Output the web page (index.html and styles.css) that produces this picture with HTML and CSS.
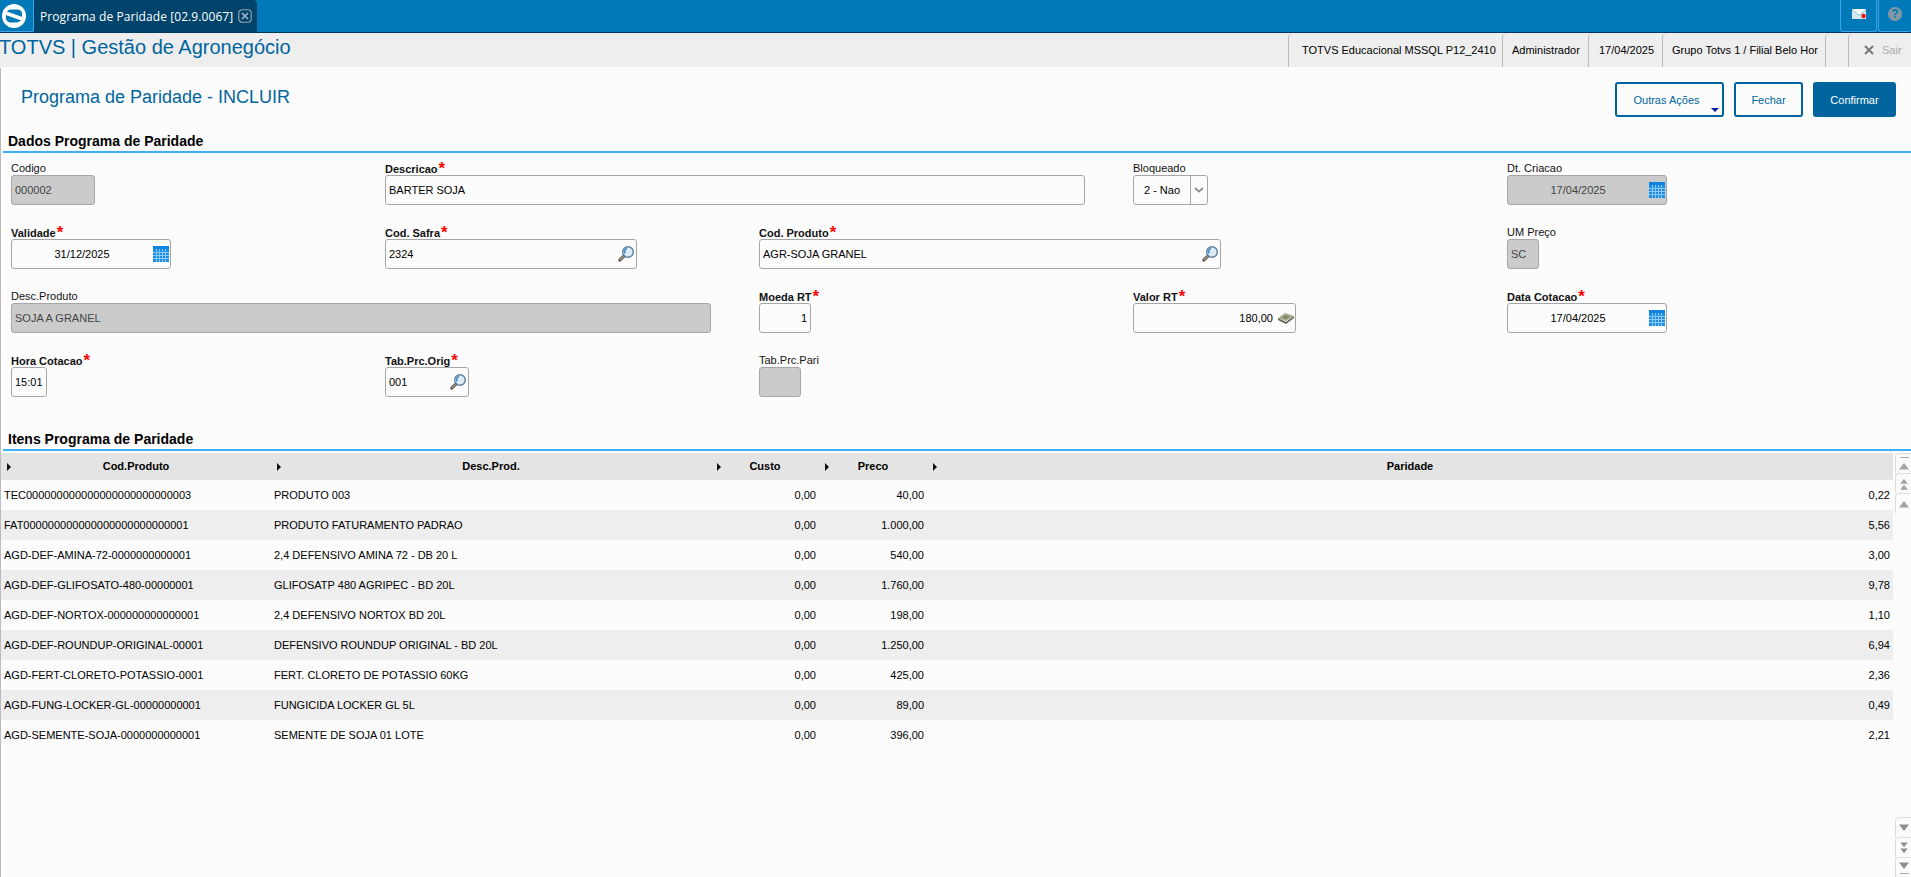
FILE: index.html
```html
<!DOCTYPE html>
<html lang="pt-BR">
<head>
<meta charset="utf-8">
<title>Programa de Paridade</title>
<link rel="stylesheet" href="styles.css">
</head>
<body>
<svg class="sprites" width="0" height="0" aria-hidden="true">
  <symbol id="cal" viewBox="0 0 16 16">
    <rect width="16" height="16" fill="#1b8fe8"/>
    <rect y="0" width="16" height="3" fill="#0f84e2"/>
    <path d="M0 6.5h16M0 9.5h16M0 12.5h16M3.5 3v13M6.5 3v13M9.5 3v13M12.5 3v13" stroke="#8cc8f5" stroke-width="1"/>
  </symbol>
  <symbol id="lupa" viewBox="0 0 16 16">
    <path d="M6.5 9.5 1.8 14.2" stroke="#6f6a60" stroke-width="3.2" stroke-linecap="round"/>
    <path d="M6.5 9.5 2 14" stroke="#a89d8a" stroke-width="1"/>
    <circle cx="10" cy="6" r="5.3" fill="#dcecf8" stroke="#5a7f9c" stroke-width="1.4"/>
    <path d="M7 7.5a3.6 3.6 0 0 1 2-5" stroke="#3b89c9" stroke-width="1.6" fill="none"/>
  </symbol>
  <symbol id="up" viewBox="0 0 16 8"><path d="M3 7.5 8 1l5 6.5z" fill="#a3a3a3"/></symbol>
  <symbol id="down" viewBox="0 0 16 8"><path d="M3 .5 8 7l5-6.5z" fill="#8f8f8f"/></symbol>
</svg>

<header class="topbar">
  <div class="logo-box">
    <svg class="logo" viewBox="0 0 28 28" width="28" height="28">
      <circle cx="14" cy="14" r="12" fill="#fff"/>
      <path d="M10 7.5h8a5 5 0 0 1 4 5.5v2a6 6 0 0 1-5 5.5h-7a5 5 0 0 1-4-5.5v-2a6 6 0 0 1 4-5.5z" fill="#0079b8"/>
      <path d="M5.5 11 22.500 17" stroke="#fff" stroke-width="3.600"/>
    </svg>
  </div>
  <div class="tab">
    <span class="tab-text">Programa de Paridade [02.9.0067]</span>
    <svg class="tab-close" viewBox="0 0 14 14" width="14" height="14">
      <rect x=".75" y=".75" width="12.5" height="12.5" rx="3.5" fill="none" stroke="#90a6b5" stroke-width="1.2"/>
      <path d="M4 4l6 6M10 4l-6 6" stroke="#a5b6c2" stroke-width="1.6"/>
    </svg>
  </div>
  <div class="top-actions">
    <div class="top-btn top-btn-mail">
      <svg viewBox="0 0 16 12" width="16" height="12">
        <path d="M1 1.5h14v9.5H1z" fill="#d6e9f5"/>
        <path d="M1 1h14L8 6.5z" fill="#fff"/>
        <path d="M1 2l7 5.6L15 2" fill="none" stroke="#7fb2d2" stroke-width=".8"/>
        <circle cx="12.500" cy="8" r="2.200" fill="#f01010"/>
      </svg>
    </div>
    <div class="top-btn top-btn-help"><span class="help">?</span></div>
  </div>
</header>

<div class="appbar">
  <div class="app-title">TOTVS | Gestão de Agronegócio</div>
  <div class="app-info">
    <div class="info info-env">TOTVS Educacional MSSQL P12_2410</div>
    <div class="info info-user">Administrador</div>
    <div class="info info-date">17/04/2025</div>
    <div class="info info-branch">Grupo Totvs 1 / Filial Belo Hor</div>
    <div class="info info-empty"></div>
    <div class="info info-exit">
      <svg viewBox="0 0 10 10" width="10" height="10"><path d="M1 1l8 8M9 1 1 9" stroke="#777" stroke-width="2"/></svg>
      <span>Sair</span>
    </div>
  </div>
</div>

<main class="page">
  <div class="page-head">
    <h1 class="page-title">Programa de Paridade - INCLUIR</h1>
    <div class="actions">
      <button class="btn btn-more">Outras Ações<i class="caret"></i></button>
      <button class="btn btn-close">Fechar</button>
      <button class="btn btn-ok">Confirmar</button>
    </div>
  </div>

  <h2 class="section">Dados Programa de Paridade</h2>
  <section class="form">
    <div class="field">
      <label>Codigo</label>
      <div class="box off w84">000002</div>
    </div>
    <div class="field span2">
      <label class="req">Descricao<em>*</em></label>
      <div class="box w700">BARTER SOJA</div>
    </div>
    <div class="field">
      <label>Bloqueado</label>
      <div class="box select w75"><span class="sel-val">2 - Nao</span><span class="sel-btn"><svg viewBox="0 0 10 6" width="10" height="6"><path d="M1 1l4 3.6L9 1" fill="none" stroke="#8a8a8a" stroke-width="1.8"/></svg></span></div>
    </div>
    <div class="field">
      <label>Dt. Criacao</label>
      <div class="box off date w160"><span class="date-val">17/04/2025</span><svg class="ico16" width="16" height="16"><use href="#cal"/></svg></div>
    </div>

    <div class="field">
      <label class="req">Validade<em>*</em></label>
      <div class="box date w160"><span class="date-val">31/12/2025</span><svg class="ico16" width="16" height="16"><use href="#cal"/></svg></div>
    </div>
    <div class="field">
      <label class="req">Cod. Safra<em>*</em></label>
      <div class="box lookup w252"><span>2324</span><svg class="ico16" width="16" height="16"><use href="#lupa"/></svg></div>
    </div>
    <div class="field span2">
      <label class="req">Cod. Produto<em>*</em></label>
      <div class="box lookup w462"><span>AGR-SOJA GRANEL</span><svg class="ico16" width="16" height="16"><use href="#lupa"/></svg></div>
    </div>
    <div class="field">
      <label>UM Preço</label>
      <div class="box off w32">SC</div>
    </div>

    <div class="field span2">
      <label>Desc.Produto</label>
      <div class="box off w700">SOJA A GRANEL</div>
    </div>
    <div class="field">
      <label class="req">Moeda RT<em>*</em></label>
      <div class="box num w52">1</div>
    </div>
    <div class="field">
      <label class="req">Valor RT<em>*</em></label>
      <div class="box money w163"><span>180,00</span>
        <svg class="ico-money" viewBox="0 0 16 11" width="16" height="11">
          <path d="M0 7l8 4 8-6v-2L8 9 0 5z" fill="#5d6350"/>
          <path d="M0 5l7-5 9 3-8 5z" fill="#a7ad8c"/>
          <path d="M4 4.6l3.4-2.4 4.4 1.4-3.6 2.6z" fill="#7e8a66"/>
        </svg>
      </div>
    </div>
    <div class="field">
      <label class="req">Data Cotacao<em>*</em></label>
      <div class="box date w160"><span class="date-val">17/04/2025</span><svg class="ico16" width="16" height="16"><use href="#cal"/></svg></div>
    </div>

    <div class="field">
      <label class="req">Hora Cotacao<em>*</em></label>
      <div class="box w35">15:01</div>
    </div>
    <div class="field">
      <label class="req">Tab.Prc.Orig<em>*</em></label>
      <div class="box lookup w84"><span>001</span><svg class="ico16" width="16" height="16"><use href="#lupa"/></svg></div>
    </div>
    <div class="field">
      <label>Tab.Prc.Pari</label>
      <div class="box off w42"></div>
    </div>
  </section>

  <h2 class="section">Itens Programa de Paridade</h2>
  <div class="grid-wrap">
    <table class="grid">
      <colgroup>
        <col class="c1"><col class="c2"><col class="c3"><col class="c4"><col class="c5">
      </colgroup>
      <thead>
        <tr>
          <th><i class="arrow"></i>Cod.Produto</th>
          <th><i class="arrow"></i>Desc.Prod.</th>
          <th><i class="arrow"></i>Custo</th>
          <th><i class="arrow"></i>Preco</th>
          <th><i class="arrow"></i>Paridade</th>
        </tr>
      </thead>
      <tbody>
        <tr><td>TEC000000000000000000000000003</td><td>PRODUTO 003</td><td class="r">0,00</td><td class="r">40,00</td><td class="r">0,22</td></tr>
        <tr><td>FAT000000000000000000000000001</td><td>PRODUTO FATURAMENTO PADRAO</td><td class="r">0,00</td><td class="r">1.000,00</td><td class="r">5,56</td></tr>
        <tr><td>AGD-DEF-AMINA-72-0000000000001</td><td>2,4 DEFENSIVO AMINA 72 - DB 20 L</td><td class="r">0,00</td><td class="r">540,00</td><td class="r">3,00</td></tr>
        <tr><td>AGD-DEF-GLIFOSATO-480-00000001</td><td>GLIFOSATP 480 AGRIPEC - BD 20L</td><td class="r">0,00</td><td class="r">1.760,00</td><td class="r">9,78</td></tr>
        <tr><td>AGD-DEF-NORTOX-000000000000001</td><td>2,4 DEFENSIVO NORTOX BD 20L</td><td class="r">0,00</td><td class="r">198,00</td><td class="r">1,10</td></tr>
        <tr><td>AGD-DEF-ROUNDUP-ORIGINAL-00001</td><td>DEFENSIVO ROUNDUP ORIGINAL - BD 20L</td><td class="r">0,00</td><td class="r">1.250,00</td><td class="r">6,94</td></tr>
        <tr><td>AGD-FERT-CLORETO-POTASSIO-0001</td><td>FERT. CLORETO DE POTASSIO 60KG</td><td class="r">0,00</td><td class="r">425,00</td><td class="r">2,36</td></tr>
        <tr><td>AGD-FUNG-LOCKER-GL-00000000001</td><td>FUNGICIDA LOCKER GL 5L</td><td class="r">0,00</td><td class="r">89,00</td><td class="r">0,49</td></tr>
        <tr><td>AGD-SEMENTE-SOJA-0000000000001</td><td>SEMENTE DE SOJA 01 LOTE</td><td class="r">0,00</td><td class="r">396,00</td><td class="r">2,21</td></tr>
      </tbody>
    </table>
    <div class="scroller">
      <div class="scroll-group">
        <div class="sb sb-first"><svg width="16" height="8"><use href="#up"/></svg></div>
        <div class="sb sb-double"><svg width="16" height="8"><use href="#up"/></svg><svg width="16" height="8"><use href="#up"/></svg></div>
        <div class="sb"><svg width="16" height="8"><use href="#up"/></svg></div>
      </div>
      <div class="scroll-group">
        <div class="sb"><svg width="16" height="8"><use href="#down"/></svg></div>
        <div class="sb sb-double"><svg width="16" height="8"><use href="#down"/></svg><svg width="16" height="8"><use href="#down"/></svg></div>
        <div class="sb sb-last"><svg width="16" height="8"><use href="#down"/></svg></div>
      </div>
    </div>
  </div>
</main>
</body>
</html>
```

FILE: styles.css
```css
* { box-sizing: border-box; }
html, body { height: 100%; }
body {
  margin: 0;
  height: 877px;
  overflow: hidden;
  display: flex;
  flex-direction: column;
  background: #fcfcfc;
  color: #000;
  font: 11px/1.2 "Liberation Sans", Arial, sans-serif;
}
.sprites { position: absolute; }

/* top bar */
.topbar {
  flex: none;
  height: 33px;
  display: flex;
  background: #0079b8;
  border-bottom: 1px solid #00395c;
}
.logo-box {
  width: 34px;
  height: 32px;
  display: flex;
  align-items: center;
  justify-content: center;
  padding-right: 5px;
  border-right: 1px solid #3ea3e6;
  border-bottom: 1px solid #3ea3e6;
  border-radius: 0 0 3px 0;
}
.tab {
  width: 223px;
  height: 32px;
  display: flex;
  align-items: center;
  padding-left: 6px;
  gap: 5px;
  background: #00436b;
  border-radius: 0 4px 0 0;
}
.tab-text {
  color: #fff;
  font: 12px "Open Sans", sans-serif;
  letter-spacing: .08px;
  white-space: nowrap;
}
.top-actions { margin-left: auto; display: flex; gap: 1px; }
.top-btn {
  height: 32px;
  display: flex;
  align-items: center;
  justify-content: center;
  border: 1px solid #3ea3e6;
  border-top: 0;
  border-radius: 0 0 3px 3px;
}
.top-btn-mail { width: 37px; padding-bottom: 4px; }
.top-btn-help { width: 33px; padding-bottom: 4px; border-right: 0; }
.help {
  width: 14px;
  height: 14px;
  border-radius: 50%;
  background: #8597a3;
  color: #0079b8;
  font: bold 12px/14px "Liberation Sans", sans-serif;
  text-align: center;
}

/* application strip */
.appbar {
  flex: none;
  height: 34px;
  display: flex;
  background: #eee;
}
.app-title {
  margin-left: -1px;
  color: #00659e;
  font-size: 20px;
  line-height: 28px;
  white-space: nowrap;
}
.app-info { margin-left: auto; display: flex; }
.info {
  height: 34px;
  border-left: 1px solid #b9b9b9;
  border-radius: 5px 0 0 0;
  padding-left: 9px;
  line-height: 34px;
  white-space: nowrap;
  overflow: hidden;
}
.info-env { width: 214px; padding-left: 13px; }
.info-user { width: 86px; }
.info-date { width: 74px; padding-left: 10px; }
.info-branch { width: 163px; }
.info-empty { width: 23px; padding: 0; }
.info-exit {
  width: 63px;
  padding-left: 15px;
  display: flex;
  align-items: center;
  gap: 8px;
  color: #aaa;
}

/* page */
.page {
  flex: 1;
  min-height: 0;
  display: flex;
  flex-direction: column;
  border-left: 1px solid #bbb;
  margin-top: 1px;
}
.page-head {
  flex: none;
  height: 61px;
  display: flex;
  justify-content: space-between;
  padding: 14px 15px 0 21px;
}
.page-title {
  margin: 4px 0 0 -1px;
  color: #00659e;
  font-size: 18px;
  font-weight: 400;
  line-height: 22px;
}
.actions { display: flex; gap: 10px; }
.btn {
  height: 35px;
  border: 2px solid #00659e;
  border-radius: 3px;
  background: #fcfcfc;
  color: #00659e;
  font: 11px "Liberation Sans", sans-serif;
  padding: 0;
}
.btn-more { width: 109px; position: relative; padding-right: 6px; }
.btn-close { width: 69px; }
.btn-ok { width: 83px; background: #00659e; color: #fff; }
.caret {
  position: absolute;
  right: 3px;
  bottom: 3px;
  border: 4px solid transparent;
  border-top: 4px solid #0a1fa8;
  border-bottom: 0;
}
.section {
  flex: none;
  margin: 0 0 0 2px;
  height: 24px;
  padding: 4px 0 0 5px;
  border-bottom: 2px solid #3daefb;
  font-size: 14px;
  font-weight: 700;
  line-height: 17px;
}

/* form */
.form {
  flex: none;
  height: 274px;
  display: grid;
  grid-template-columns: repeat(5, 374px);
  grid-auto-rows: 52px;
  row-gap: 12px;
  align-content: start;
  padding: 4px 0 0 10px;
}
.field { min-width: 0; }
.span2 { grid-column: span 2; }
.field label {
  display: block;
  height: 18px;
  line-height: 22px;
  color: #111;
  white-space: nowrap;
}
.field label.req { font-weight: 700; line-height: 24px; }
.field label em {
  color: #f00;
  font-style: normal;
  font-weight: 700;
  font-size: 17px;
  line-height: 0;
  margin-left: 1px;
  vertical-align: -1px;
}
.box {
  height: 30px;
  border: 1px solid #a6a6a6;
  border-radius: 3px;
  background: #fcfcfc;
  padding: 0 3px;
  line-height: 28px;
  white-space: nowrap;
  overflow: hidden;
}
.off { background: #cbcbcb; color: #444; }
.w32 { width: 32px; }
.w35 { width: 36px; }
.w42 { width: 42px; }
.w52 { width: 52px; }
.w75 { width: 75px; }
.w84 { width: 84px; }
.w160 { width: 160px; }
.w163 { width: 163px; }
.w252 { width: 252px; }
.w462 { width: 462px; }
.w700 { width: 700px; }
.num { text-align: right; }
.date, .lookup, .money, .select { display: flex; align-items: center; }
.date { padding: 0 1px 0 0; }
.date-val { flex: 1; text-align: center; padding-right: 1px; }
.lookup { justify-content: space-between; padding-right: 2px; }
.money { justify-content: flex-end; gap: 5px; padding-right: 1px; }
.select { padding: 0; }
.sel-val { flex: 1; text-align: center; }
.sel-btn {
  width: 17px;
  height: 100%;
  display: flex;
  align-items: center;
  justify-content: center;
  border-left: 1px solid #a6a6a6;
}

/* items */
.grid-wrap {
  flex: 1;
  min-height: 0;
  display: flex;
  gap: 2px;
  padding-top: 2px;
}
.grid {
  width: 1892px;
  height: max-content;
  flex: none;
  table-layout: fixed;
  border-collapse: collapse;
}
.c1 { width: 270px; }
.c2 { width: 440px; }
.c3, .c4 { width: 108px; }
.c5 { width: 966px; }
.grid th {
  position: relative;
  height: 27px;
  padding: 0;
  background: #e4e4e4;
  font-size: 11px;
  font-weight: 700;
  text-align: center;
}
.arrow {
  position: absolute;
  left: 6px;
  top: 10px;
  border: 4px solid transparent;
  border-left: 4px solid #111;
  border-right: 0;
}
.grid td {
  height: 30px;
  padding: 1px 3px 0;
  white-space: nowrap;
  overflow: hidden;
}
.grid tbody tr:nth-child(even) td { background: #eee; }
.grid td.r { text-align: right; }

.scroller {
  flex: none;
  width: 16px;
  display: flex;
  flex-direction: column;
  justify-content: space-between;
}
.scroll-group { display: flex; flex-direction: column; }
.sb {
  height: 20px;
  display: flex;
  flex-direction: column;
  align-items: center;
  justify-content: center;
  border-left: 1px solid #ddd;
  border-top: 1px solid #ddd;
  border-radius: 4px 0 0 0;
  background: #fbfbfb;
}
.sb-double svg { height: 6px; }
.sb-first { padding-top: 4px; position: relative; }
.sb-first::before {
  content: "";
  position: absolute;
  left: 4px;
  top: 3px;
  width: 9px;
  height: 1px;
  background: #aaa;
}
.sb-last { padding-bottom: 4px; position: relative; }
.sb-last::after {
  content: "";
  position: absolute;
  left: 4px;
  bottom: 3px;
  width: 9px;
  height: 1px;
  background: #aaa;
}
```
